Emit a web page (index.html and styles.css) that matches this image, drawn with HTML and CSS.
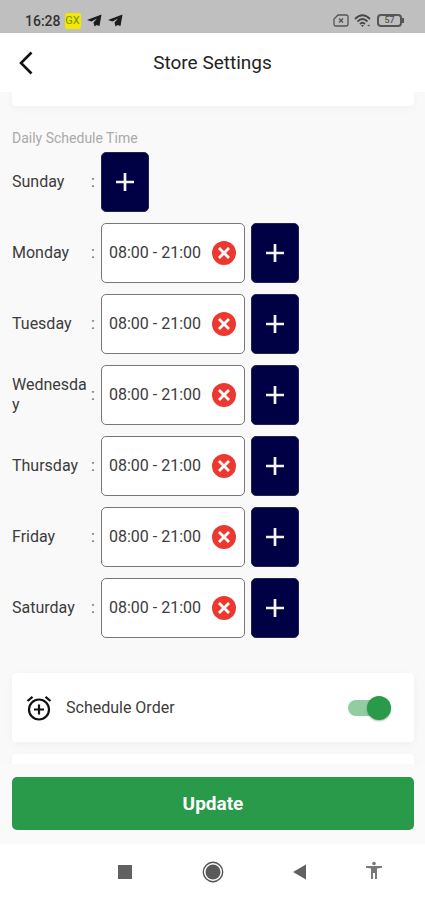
FILE: index.html
```html
<!DOCTYPE html>
<html lang="en">
<head>
	<meta charset="utf-8">
	<meta name="viewport" content="width=device-width, initial-scale=1.0">
	<title>Store Settings</title>

	<link rel="stylesheet" href="styles.css">
</head>
<body>
	<!-- shared icons -->
	<svg class="defs" aria-hidden="true">
		<symbol id="plus" viewBox="0 0 24 24"><path d="M12 3v18M3 12h18" fill="none" stroke="#f4f4f4" stroke-width="2.700"/></symbol>
		<symbol id="cancel" viewBox="0 0 24 24">
			<circle cx="12" cy="12" r="12" fill="#ec392f"/>
			<path d="M7 7l10 10M17 7L7 17" fill="none" stroke="#fff" stroke-width="2.800"/>
		</symbol>
		<symbol id="plane" viewBox="0 0 15 13"><path d="M0 6L14.500 0.500 12.500 12 9.500 11 7.500 12.500 6.500 8.500 10 4.500 4.500 7.500z" fill="#1c1c1c"/></symbol>
	</svg>

	<div class="status">
		<span class="clock">16:28</span>
		<span class="gx">GX</span>
		<svg class="plane" width="15" height="13"><use href="#plane"/></svg>
		<svg class="plane" width="15" height="13"><use href="#plane"/></svg>
		<span class="system">
			<svg width="16" height="13" viewBox="0 0 16 13" fill="none" stroke="#555">
				<path d="M5 1h8q2 0 2 2v7q0 2-2 2H3q-2 0-2-2V5z" stroke-width="1.300"/>
				<path d="M6 4.500l4 4M10 4.500l-4 4" stroke-width="1.400"/>
			</svg>
			<svg width="18" height="14" viewBox="0 0 18 14" fill="none" stroke="#484848" stroke-width="1.800">
				<path d="M1 5q7.500-7.500 15 0M3.500 7.500q5-5 10 0M6 10q2.500-2.500 5 0"/>
				<path d="M7 11h3l-1.500 2zM13 11.500l2.500-1v2z" fill="#484848" stroke="none"/>
			</svg>
			<span class="battery">57</span>
		</span>
	</div>

	<header>
		<button class="back" type="button" aria-label="Back">
			<svg width="16" height="24" viewBox="0 0 16 24"><path d="M13.500 1.500L3 12l10.500 10.500" fill="none" stroke="#111" stroke-width="2.600"/></svg>
		</button>
		<h1>Store Settings</h1>
	</header>

	<main>
		<section class="card card-end"></section>

		<h2>Daily Schedule Time</h2>
		<ul class="schedule">
			<li>
				<span class="day">Sunday</span><span class="colon">:</span>
				<button class="add" type="button" aria-label="Add Sunday time"><svg width="24" height="24"><use href="#plus"/></svg></button>
			</li>
			<li>
				<span class="day">Monday</span><span class="colon">:</span>
				<div class="slot">08:00 - 21:00 <button type="button" aria-label="Remove Monday time"><svg width="24" height="24"><use href="#cancel"/></svg></button></div>
				<button class="add" type="button" aria-label="Add Monday time"><svg width="24" height="24"><use href="#plus"/></svg></button>
			</li>
			<li>
				<span class="day">Tuesday</span><span class="colon">:</span>
				<div class="slot">08:00 - 21:00 <button type="button" aria-label="Remove Tuesday time"><svg width="24" height="24"><use href="#cancel"/></svg></button></div>
				<button class="add" type="button" aria-label="Add Tuesday time"><svg width="24" height="24"><use href="#plus"/></svg></button>
			</li>
			<li>
				<span class="day">Wednesday</span><span class="colon">:</span>
				<div class="slot">08:00 - 21:00 <button type="button" aria-label="Remove Wednesday time"><svg width="24" height="24"><use href="#cancel"/></svg></button></div>
				<button class="add" type="button" aria-label="Add Wednesday time"><svg width="24" height="24"><use href="#plus"/></svg></button>
			</li>
			<li>
				<span class="day">Thursday</span><span class="colon">:</span>
				<div class="slot">08:00 - 21:00 <button type="button" aria-label="Remove Thursday time"><svg width="24" height="24"><use href="#cancel"/></svg></button></div>
				<button class="add" type="button" aria-label="Add Thursday time"><svg width="24" height="24"><use href="#plus"/></svg></button>
			</li>
			<li>
				<span class="day">Friday</span><span class="colon">:</span>
				<div class="slot">08:00 - 21:00 <button type="button" aria-label="Remove Friday time"><svg width="24" height="24"><use href="#cancel"/></svg></button></div>
				<button class="add" type="button" aria-label="Add Friday time"><svg width="24" height="24"><use href="#plus"/></svg></button>
			</li>
			<li>
				<span class="day">Saturday</span><span class="colon">:</span>
				<div class="slot">08:00 - 21:00 <button type="button" aria-label="Remove Saturday time"><svg width="24" height="24"><use href="#cancel"/></svg></button></div>
				<button class="add" type="button" aria-label="Add Saturday time"><svg width="24" height="24"><use href="#plus"/></svg></button>
			</li>
		</ul>

		<section class="card option">
			<svg width="26" height="26" viewBox="0 0 26 26" fill="none" stroke="#111" stroke-width="2.200">
				<circle cx="13" cy="14.500" r="10"/>
				<path d="M13 9.500v10M8 14.500h10M1.500 6l5-4.200M24.500 6l-5-4.200"/>
			</svg>
			<label for="schedule-order">Schedule Order</label>
			<input class="switch" id="schedule-order" type="checkbox" role="switch" checked>
		</section>
		<section class="card option"></section>
	</main>

	<footer>
		<button class="update" type="button">Update</button>
	</footer>

	<nav>
		<button type="button" aria-label="Recent apps"><svg width="24" height="24" viewBox="0 0 24 24"><path d="M5 5h14v14H5z" fill="#616161"/></svg></button>
		<button type="button" aria-label="Home"><svg width="24" height="24" viewBox="0 0 24 24"><circle cx="12" cy="12" r="9.700" fill="none" stroke="#555" stroke-width="1.400"/><circle cx="12" cy="12" r="7.500" fill="#5a5a5a"/></svg></button>
		<button type="button" aria-label="Back"><svg width="24" height="24" viewBox="0 0 24 24"><path d="M17 4.500v15L4 12z" fill="#616161"/></svg></button>
		<button class="access" type="button" aria-label="Accessibility"><svg width="24" height="24" viewBox="0 0 24 24" fill="#777"><circle cx="12" cy="3.500" r="1.800"/><path d="M4 6h16v1.800l-5 .8V19h-2v-6h-2v6H9V8.600L4 7.800z"/></svg></button>
	</nav>
</body>
</html>
```

FILE: styles.css
```css
* {
	box-sizing: border-box;
}

body {
	display: flex;
	flex-direction: column;
	height: 100vh;
	margin: 0;
	background: #f9f9f9;
	color: #3c3c3c;
	font: 16px/20px Roboto, sans-serif;
}

button {
	display: flex;
	align-items: center;
	justify-content: center;
	padding: 0;
	border: 0;
	background: none;
	font: inherit;
	cursor: pointer;
}

svg {
	flex: none;
}

.defs {
	position: absolute;
	width: 0;
	height: 0;
}

/* status bar */
.status {
	display: flex;
	flex: none;
	align-items: center;
	height: 33px;
	padding: 8px 23px 0 25px;
	background: #bfbfbf;
	color: #333;
	font-size: 14px;
	font-weight: 500;
}

.gx {
	width: 16px;
	margin: 0 6px 0 4px;
	border-radius: 2px;
	background: #f5e800;
	color: #6d9200;
	font-size: 11px;
	font-weight: 400;
	line-height: 16px;
	text-align: center;
}

.plane {
	margin-right: 6px;
}

.system {
	display: flex;
	align-items: center;
	gap: 5px;
	margin-left: auto;
}

.battery {
	position: relative;
	width: 25px;
	border: 2px solid #555;
	border-radius: 4px;
	color: #555;
	font-size: 9px;
	line-height: 9px;
	text-align: center;
}

.battery::after {
	content: "";
	position: absolute;
	top: 2px;
	right: -4px;
	width: 2px;
	height: 5px;
	background: #555;
}

/* title bar */
header {
	display: grid;
	flex: none;
	grid-template-columns: 48px 1fr 48px;
	align-items: center;
	height: 59px;
	background: #fff;
}

.back {
	height: 48px;
	padding-left: 4px;
}

h1 {
	margin: 0;
	color: #222;
	font-size: 19px;
	font-weight: 400;
	text-align: center;
}

main {
	flex: 1;
	min-height: 0;
	padding: 0 11px 0 12px;
	overflow-y: auto;
	scrollbar-width: none;
}

.card {
	border-radius: 4px;
	background: #fff;
	box-shadow: 0 2px 10px rgba(0, 0, 0, 0.04);
}

.card-end {
	height: 14px;
	border-radius: 0 0 4px 4px;
}

h2 {
	margin: 22px 0 4px;
	color: #aaa;
	font-size: 14px;
	font-weight: 400;
}

/* opening hours */
.schedule {
	display: grid;
	gap: 11px;
	margin: 0 0 35px;
	padding: 0;
	list-style: none;
}

.schedule li {
	display: flex;
	align-items: center;
	height: 60px;
}

.day {
	width: 79px;
	overflow-wrap: anywhere;
}

.colon {
	width: 10px;
	color: #666;
}

.slot {
	display: flex;
	align-items: center;
	justify-content: space-between;
	width: 144px;
	height: 60px;
	margin-right: 6px;
	padding: 0 8px 0 7px;
	border: 1px solid #777;
	border-radius: 5px;
	background: #fff;
}

.add {
	width: 48px;
	height: 60px;
	border: 1px solid #22224a;
	border-radius: 5px;
	background: #000045;
}

.option {
	display: flex;
	align-items: center;
	height: 69px;
	margin-bottom: 12px;
	padding: 0 23px 0 14px;
}

.option label {
	flex: 1;
	margin-left: 14px;
}

.switch {
	position: relative;
	width: 43px;
	height: 24px;
	margin: 0;
	appearance: none;
	cursor: pointer;
}

.switch::before {
	content: "";
	position: absolute;
	inset: 4px 4px 4px 0;
	border-radius: 8px;
	background: #c4c4c4;
}

.switch::after {
	content: "";
	position: absolute;
	top: 0;
	left: 0;
	width: 24px;
	height: 24px;
	border-radius: 50%;
	background: #fff;
	box-shadow: 0 1px 2px rgba(0, 0, 0, 0.3);
}

.switch:checked::before {
	background: #91cca2;
}

.switch:checked::after {
	left: 19px;
	background: #289a49;
}

footer {
	flex: none;
	padding: 13px 11px 14px 12px;
	background: #fafafa;
}

.update {
	width: 100%;
	height: 53px;
	border-radius: 5px;
	background: #289a49;
	color: #fff;
	font-size: 19px;
	font-weight: 700;
}

/* system buttons */
nav {
	display: flex;
	flex: none;
	align-items: center;
	justify-content: center;
	gap: 64px;
	height: 56px;
	padding-left: 74px;
	background: #fff;
}

.access {
	margin-left: -15px;
}
```
